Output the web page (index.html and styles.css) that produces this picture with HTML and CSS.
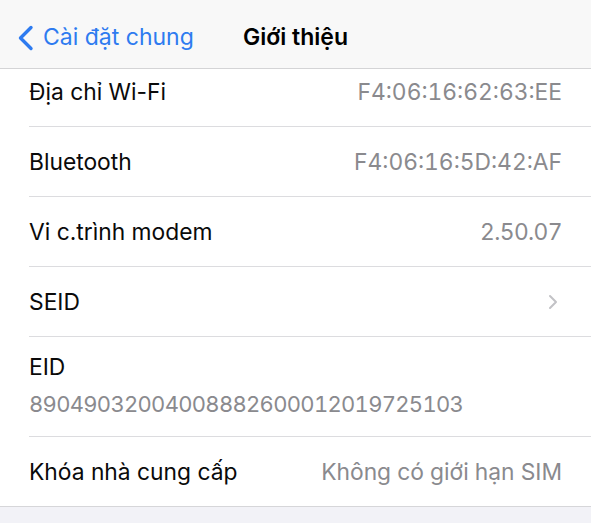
FILE: index.html
```html
<!DOCTYPE html>
<html lang="vi">
<head>
<meta charset="utf-8">
<title>Giới thiệu</title>
<link rel="stylesheet" href="styles.css">
</head>
<body>
<div class="screen">
  <header class="nav">
    <div class="back">
      <svg class="back-chev" width="17" height="26" viewBox="0 0 17 26"><path d="M14 2.5 L3.5 13 L14 23.5" fill="none" stroke="currentColor" stroke-width="3.4" stroke-linecap="round" stroke-linejoin="round"/></svg>
      <span class="back-label">Cài đặt chung</span>
    </div>
    <div class="title">Giới thiệu</div>
  </header>
  <main class="list">
    <div class="row first">
      <span class="label">Địa chỉ Wi-Fi</span>
      <span class="value">F4:06:16:62:63:EE</span>
    </div>
    <div class="row">
      <span class="label">Bluetooth</span>
      <span class="value">F4:06:16:5D:42:AF</span>
    </div>
    <div class="row">
      <span class="label">Vi c.trình modem</span>
      <span class="value num">2.50.07</span>
    </div>
    <div class="row">
      <span class="label">SEID</span>
      <svg class="chev" width="10" height="16" viewBox="0 0 10 16"><path d="M2 2 L8 8 L2 14" fill="none" stroke="currentColor" stroke-width="2" stroke-linecap="round" stroke-linejoin="round"/></svg>
    </div>
    <div class="row stacked">
      <span class="label">EID</span>
      <span class="value mono">89049032004008882600012019725103</span>
    </div>
    <div class="row last">
      <span class="label">Khóa nhà cung cấp</span>
      <span class="value">Không có giới hạn SIM</span>
    </div>
  </main>
  <div class="footer-bg"></div>
</div>
</body>
</html>
```
FILE: styles.css
```css
* { box-sizing: border-box; }
html, body { margin: 0; padding: 0; }
body {
  width: 591px;
  height: 523px;
  overflow: hidden;
  background: #f2f2f7;
  font-family: Inter, "Noto Sans", "Liberation Sans", sans-serif;
  color: #111;
}
.screen {
  display: flex;
  flex-direction: column;
  height: 523px;
}
.nav {
  position: relative;
  z-index: 2;
  height: 69px;
  background: #f8f8f8;
  border-bottom: 1px solid #d4d4d6;
  display: flex;
  align-items: center;
  padding-left: 17px;
  padding-top: 6px;
  flex-shrink: 0;
}
.back {
  display: flex;
  align-items: center;
  color: #2e7bf0;
  gap: 9px;
}
.back-chev { display: block; margin-top: 1px; }
.back-label {
  font-size: 23px;
}
.title {
  position: absolute;
  left: 243px;
  top: 6px;
  height: 62px;
  display: flex;
  align-items: center;
  font-size: 23px;
  font-weight: 600;
  color: #000;
}
.list {
  background: #fff;
  margin-top: -12px;
  position: relative;
  z-index: 1;
  border-bottom: 1px solid #d6d6d9;
}
.row {
  height: 70px;
  margin-left: 29px;
  padding-right: 29px;
  display: flex;
  align-items: center;
  justify-content: space-between;
  border-bottom: 1px solid #dcdcdf;
  font-size: 22.8px;
  line-height: 28px;
}
.row.last { border-bottom: none; height: 69px; }
.row.stacked {
  height: 100px;
  flex-direction: column;
  align-items: flex-start;
  justify-content: center;
  gap: 9px;
  padding-bottom: 2px;
}
.label { color: #0a0a0a; }
.value {
  color: #8a8a8e;
  font-feature-settings: "tnum" 1;
}
.num { letter-spacing: -0.6px; }
.mono { letter-spacing: -0.7px; font-size: 22px; }
.chev { color: #c2c2c6; margin-right: 4px; }
.footer-bg { flex: 1; background: #f2f2f7; }
```
